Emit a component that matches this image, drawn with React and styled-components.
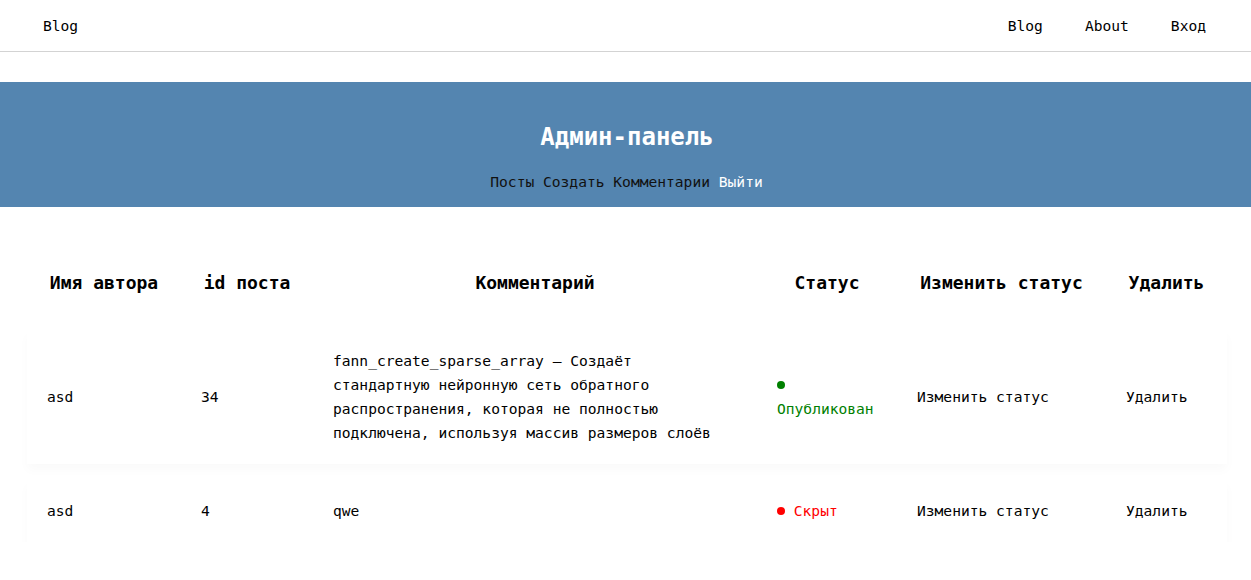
import React from 'react';
import styled, { createGlobalStyle } from 'styled-components';

const GlobalStyle = createGlobalStyle`
  body {
    margin: 0;
    background: #fff;
    color: #000;
    font-family: "DejaVu Sans Mono", "Liberation Mono", monospace;
    font-size: 14.6px;
  }
`;

const comments = [
  {
    id: 1,
    author: 'asd',
    postId: 34,
    text: 'fann_create_sparse_array — Создаёт стандартную нейронную сеть обратного распространения, которая не полностью подключена, используя массив размеров слоёв',
    published: true,
  },
  {
    id: 2,
    author: 'asd',
    postId: 4,
    text: 'qwe',
    published: false,
  },
];

const columns = '154px 132px 444px 140px 209px 121px';

const App = () => {
  return (
    <>
      <GlobalStyle />
      <TopNav>
        <NavLink>Blog</NavLink>
        <NavRight>
          <NavLink>Blog</NavLink>
          <NavLink>About</NavLink>
          <NavLink>Вход</NavLink>
        </NavRight>
      </TopNav>

      <Banner>
        <Title>Админ-панель</Title>
        <AdminMenu>
          <MenuLink>Посты</MenuLink>{' '}
          <MenuLink>Создать</MenuLink>{' '}
          <MenuLink>Комментарии</MenuLink>{' '}
          <MenuLink $active>Выйти</MenuLink>
        </AdminMenu>
      </Banner>

      <Table>
        <HeadRow>
          <HeadCell>Имя автора</HeadCell>
          <HeadCell>id поста</HeadCell>
          <HeadCell>Комментарий</HeadCell>
          <HeadCell>Статус</HeadCell>
          <HeadCell>Изменить статус</HeadCell>
          <HeadCell>Удалить</HeadCell>
        </HeadRow>
        {comments.map((c) => (
          <Row key={c.id}>
            <Cell>{c.author}</Cell>
            <Cell>{c.postId}</Cell>
            <Cell>
              <CommentText>{c.text}</CommentText>
            </Cell>
            <Cell>
              <Status $published={c.published}>
                <Dot $published={c.published} /> {c.published ? 'Опубликован' : 'Скрыт'}
              </Status>
            </Cell>
            <Cell>
              <ActionLink>Изменить статус</ActionLink>
            </Cell>
            <Cell>
              <ActionLink>Удалить</ActionLink>
            </Cell>
          </Row>
        ))}
      </Table>
    </>
  );
};

const TopNav = styled.nav`
  display: flex;
  justify-content: space-between;
  align-items: center;
  height: 51px;
  padding: 0 24px 0 22px;
  border-bottom: 1px solid #d3d3d3;
`;

const NavRight = styled.div`
  display: flex;
`;

const NavLink = styled.a`
  padding: 0 21px;
  color: #000;
  text-decoration: none;
  line-height: 20px;
`;

const Banner = styled.header`
  margin-top: 30px;
  height: 125px;
  box-sizing: border-box;
  padding-top: 41px;
  background: #5485b0;
  text-align: center;
`;

const Title = styled.h1`
  margin: 0 0 20px 3px;
  font-size: 24px;
  line-height: 29px;
  font-weight: bold;
  color: #fff;
`;

const AdminMenu = styled.div`
  line-height: 20px;
  white-space: pre;
  padding-left: 2px;
`;

const MenuLink = styled.a`
  color: ${(p) => (p.$active ? '#fff' : '#111')};
  text-decoration: none;
`;

const Table = styled.div`
  width: 1200px;
  margin: 48px 0 0 27px;
  display: flex;
  flex-direction: column;
  gap: 16px;
`;

const HeadRow = styled.div`
  display: grid;
  grid-template-columns: ${columns};
  margin-bottom: 2px;
`;

const HeadCell = styled.div`
  padding: 16px 20px 17px;
  line-height: 24px;
  font-size: 18px;
  font-weight: bold;
  text-align: center;
  white-space: nowrap;
`;

const Row = styled.div`
  display: grid;
  grid-template-columns: ${columns};
  align-items: center;
  background: #fff;
  box-shadow: 0 6px 10px rgba(0, 0, 0, 0.025);
`;

const Cell = styled.div`
  padding: 19px 20px;
  line-height: 24px;
`;

const CommentText = styled.div`
  max-width: 392px;
`;

const Status = styled.span`
  color: ${(p) => (p.$published ? '#008000' : '#ff0000')};
`;

const Dot = styled.span`
  display: inline-block;
  width: 8px;
  height: 8px;
  border-radius: 50%;
  background: ${(p) => (p.$published ? '#008000' : '#ff0000')};
  vertical-align: 1px;
`;

const ActionLink = styled.a`
  color: #000;
  text-decoration: none;
`;

export default App;
